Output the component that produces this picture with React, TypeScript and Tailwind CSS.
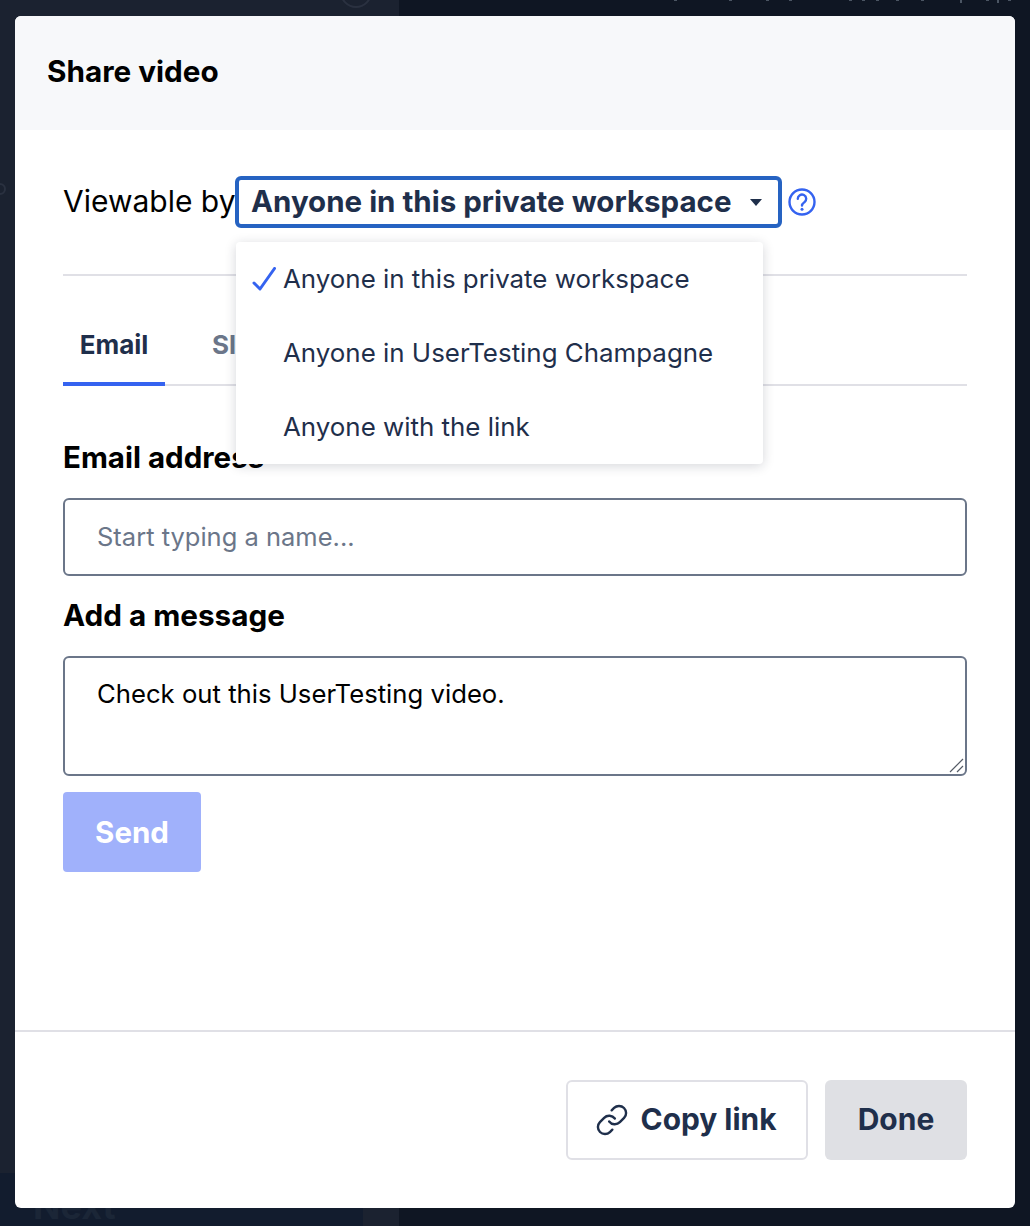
import { Link } from 'lucide-react';

const font = "font-['Inter',sans-serif]";

export default function App() {
  return (
    <div className={`relative w-[1030px] h-[1226px] overflow-hidden bg-[#0f1623] ${font}`}>
      {/* dimmed page behind the modal */}
      <div className="absolute inset-0 flex">
        <div className="w-[399px] h-full flex flex-col bg-[#1b2230]">
          <div className="flex-1" />
          <div className="h-[53px] bg-[#121c2e] flex">
            <div className="flex-1 pl-[33px] pt-[15px] text-[36px] leading-none font-bold text-[#1b2637]">Next</div>
            <div className="w-[36px] bg-[#1b2230]" />
          </div>
        </div>
      </div>
      <div className="absolute left-[340px] top-[-24px] w-[32px] h-[32px] rounded-full border-2 border-[#2a3140]" />
      <div className="absolute left-[-6px] top-[183px] w-[12px] h-[12px] rounded-full border-2 border-[#2a3140]" />
      {/* specks of the page's cut off line at the very top */}
      <svg className="absolute left-[640px] top-0" width="390" height="4" fill="#4b5563">
        <rect x="34" width="3" height="1" />
        <rect x="89" width="3" height="1" />
        <rect x="126" width="3" height="1" />
        <rect x="149" width="3" height="1" />
        <rect x="209" width="3" height="1" />
        <rect x="222" width="3" height="1" />
        <rect x="236" width="3" height="1" />
        <rect x="256" width="3" height="1" />
        <rect x="281" width="3" height="1" />
        <rect x="320" width="2" height="3" />
        <rect x="346" width="3" height="1" />
        <rect x="357" width="2" height="3" />
        <rect x="368" width="3" height="1" />
      </svg>

      {/* modal */}
      <div className="absolute left-[15px] top-[16px] w-[1000px] h-[1192px] bg-white rounded-[6px] flex flex-col overflow-hidden">
        <div className="h-[114px] shrink-0 bg-[#f7f8fa] flex items-center px-8">
          <h2 className="text-[29.7px] font-bold text-black leading-none -mt-[2px]">Share video</h2>
        </div>

        <div className="flex-1 px-12 pt-[46px]">
          <div className="flex items-center h-[52px]">
            <span className="w-[172px] shrink-0 text-[30px] text-black whitespace-nowrap -mt-[2px]">Viewable by</span>
            <div className="w-[547px] h-[52px] shrink-0 border-[4px] border-[#2663c2] rounded-[6px] flex items-center justify-between pl-[12px] pr-[16px]">
              <span className="text-[29.5px] font-bold text-[#1f2f4b] whitespace-nowrap -mt-[1px]">Anyone in this private workspace</span>
              <span className="w-0 h-0 border-x-[6px] border-x-transparent border-t-[7px] border-t-[#1f2f4b]" />
            </div>
            <svg className="ml-[6px]" width="28" height="28" viewBox="0 0 28 28" fill="none" stroke="#3563f0" strokeWidth="2.400">
              <circle cx="14" cy="14" r="12.500" />
              <path d="M9.800 10.800a4.200 4.200 0 1 1 6.600 3.400c-1.400 1-2.400 1.600-2.400 3.400" strokeLinecap="round" />
              <circle cx="14" cy="21.300" r="1.500" fill="#3563f0" stroke="none" />
            </svg>
          </div>

          <div className="mt-[46px] h-[2px] bg-[#e0e0e6]" />

          <div className="mt-[38px] h-[72px] flex border-b-2 border-[#e0e0e6] gap-[16px]">
            <div className="w-[102px] h-[72px] border-b-4 border-[#3563f0] flex items-start justify-center text-[26px] font-bold text-[#1f2f4b] leading-[62px]">Email</div>
            <div className="pl-[31px] text-[26px] font-bold text-[#6b7689] leading-[62px]">Slack</div>
          </div>

          <label className="block mt-[51px] text-[29.5px] font-bold text-black leading-[40px]">Email address</label>
          <input
            className="block mt-[21px] w-full h-[78px] border-2 border-[#6b7689] rounded-[6px] px-8 pb-[2px] text-[25.5px] placeholder:text-[#6b7689] outline-none"
            placeholder="Start typing a name..."
          />

          <label className="block mt-[19px] text-[29.7px] font-bold text-black leading-[40px]">Add a message</label>
          <div className="relative mt-[21px]">
            <textarea
              className="block w-full h-[120px] resize-none border-2 border-[#6b7689] rounded-[6px] px-8 pt-[18px] text-[25.7px] leading-[36px] text-black outline-none"
              defaultValue="Check out this UserTesting video."
            />
            <svg className="absolute right-[3px] bottom-[3px]" width="15" height="15" viewBox="0 0 15 15" stroke="#555b66" strokeWidth="1.200" fill="none">
              <path d="M1 14 14 1M8 14l6-6" />
            </svg>
          </div>

          <button className="block mt-[16px] w-[138px] h-[80px] rounded-[4px] bg-[#a0b1fb] text-white text-[29.5px] font-bold">Send</button>
        </div>

        <div className="h-[178px] shrink-0 border-t-2 border-[#e0e0e6] flex items-start justify-end gap-[17px] px-12 pt-[48px]">
          <button className="w-[242px] h-[80px] pb-[2px] rounded-[6px] border-2 border-[#e0e0e6] flex items-center justify-center gap-[15px] text-[29.9px] font-bold text-[#1f2f4b]">
            <Link size={34} strokeWidth={1.700} className="-mx-[3px] mt-[2px]" />
            Copy link
          </button>
          <button className="w-[142px] h-[80px] pb-[2px] rounded-[6px] bg-[#dfe0e4] text-[30px] font-bold text-[#1f2f4b]">Done</button>
        </div>
      </div>

      {/* open dropdown */}
      <div className="absolute left-[236px] top-[242px] w-[527px] h-[222px] bg-white rounded-[4px] shadow-[0_2px_12px_rgba(20,30,50,0.18)] flex flex-col text-[25.9px] text-[#1f2f4b]">
        <div className="h-[74px] flex items-center">
          <svg className="ml-[16px] mr-[7px]" width="24" height="24" viewBox="0 0 24 24" fill="none" stroke="#3563f0" strokeWidth="3" strokeLinecap="round" strokeLinejoin="round">
            <path d="M2 16 8 22 22.500 1.500" />
          </svg>
          <span className="whitespace-nowrap">Anyone in this private workspace</span>
        </div>
        <div className="h-[74px] flex items-center pl-[47px]">Anyone in UserTesting Champagne</div>
        <div className="h-[74px] flex items-center pl-[47px]">Anyone with the link</div>
      </div>
    </div>
  );
}
